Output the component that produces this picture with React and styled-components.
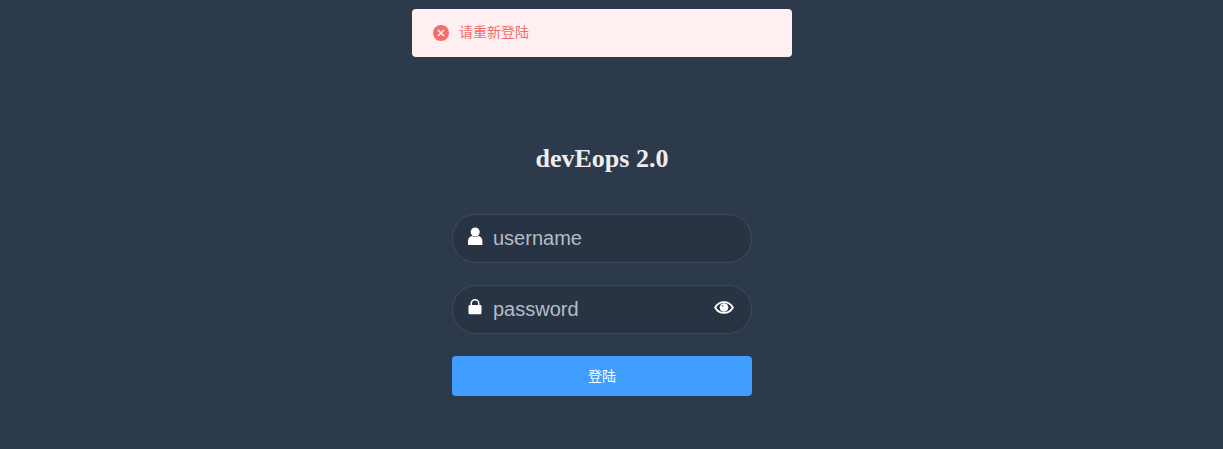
import React from 'react'
import styled, { createGlobalStyle } from 'styled-components'

const GlobalStyle = createGlobalStyle`
  html, body {
    margin: 0;
    height: 100%;
    background-color: #2d3a4b;
  }
  #root {
    height: 100%;
  }
`

const Page = styled.div`
  position: relative;
  box-sizing: border-box;
  width: 1204px;
  height: 449px;
  overflow: hidden;
  padding-top: 144px;
  font-family: "Liberation Sans", "Noto Sans CJK SC", sans-serif;
`

const Message = styled.div`
  position: absolute;
  top: 9px;
  left: 50%;
  transform: translateX(-50%);
  box-sizing: border-box;
  width: 380px;
  height: 48px;
  padding: 0 21px;
  display: flex;
  align-items: center;
  gap: 10px;
  background-color: #fef0f0;
  border-radius: 4px;
  color: #f56c6c;
  font-size: 14px;
`

const MessageIcon = styled.svg`
  width: 16px;
  height: 16px;
  flex: none;
`

const MessageText = styled.span`
  margin-bottom: 4px;
`

const Title = styled.h3`
  margin: 0 0 41px;
  height: 29px;
  line-height: 29px;
  text-align: center;
  color: #eee;
  font-family: "Liberation Serif", serif;
  font-size: 26px;
  font-weight: bold;
`

const Form = styled.form`
  width: 300px;
  margin: 0 auto;
  display: flex;
  flex-direction: column;
  gap: 22px;
`

const Field = styled.label`
  box-sizing: border-box;
  height: 49px;
  padding: 0 15px;
  display: flex;
  align-items: center;
  background-color: rgba(0, 0, 0, 0.1);
  border: 1px solid rgba(255, 255, 255, 0.1);
  border-radius: 24px;
`

const FieldIcon = styled.svg`
  width: 16px;
  height: 18px;
  flex: none;
  margin-top: -5px;
  fill: #fff;
`

const Input = styled.input`
  flex: 1;
  min-width: 0;
  margin-left: 9px;
  padding: 0;
  border: 0;
  outline: 0;
  background: transparent;
  color: #fff;
  font-family: inherit;
  font-size: 20px;
  &::placeholder {
    color: #b4bcc8;
    opacity: 1;
  }
`

const EyeIcon = styled.svg`
  width: 20px;
  height: 15px;
  flex: none;
  margin: -4px 2px 0 0;
`

const Submit = styled.button`
  height: 40px;
  padding: 0 0 3px;
  border: 0;
  border-radius: 4px;
  background-color: #409eff;
  color: #fff;
  font-family: inherit;
  font-size: 14px;
`

export default function App() {
  return (
    <Page>
      <GlobalStyle />
      <Message>
        <MessageIcon viewBox="0 0 16 16">
          <circle cx="8" cy="8" r="8" fill="#f56c6c" />
          <path d="M5 5l6 6M11 5l-6 6" stroke="#fef0f0" strokeWidth="1.700" />
        </MessageIcon>
        <MessageText>请重新登陆</MessageText>
      </Message>
      <Title>devEops 2.0</Title>
      <Form>
        <Field>
          <FieldIcon viewBox="0 0 16 18">
            <circle cx="7.200" cy="5" r="4.500" />
            <path d="M0 18v-4C0 11 2 9.400 4 9c1.900 1.200 4.500 1.200 6.400 0 2 .4 4 2 4 5v4z" />
          </FieldIcon>
          <Input placeholder="username" />
        </Field>
        <Field>
          <FieldIcon viewBox="0 0 16 18">
            <path d="M2.500 8V5.500a4.500 4.500 0 0 1 9 0V8H10V5.500a3 3 0 0 0-6 0V8z" />
            <rect x="0.500" y="7" width="13" height="9.300" rx="1.200" />
          </FieldIcon>
          <Input placeholder="password" />
          <EyeIcon viewBox="0 0 22 16">
            <path d="M1.200 8C3.500 4 7 2 11 2s7.500 2 9.800 6c-2.300 4-5.800 6-9.800 6S3.500 12 1.200 8z" fill="none" stroke="#fff" strokeWidth="2" />
            <circle cx="11" cy="8" r="4.800" fill="#fff" />
            <circle cx="9.400" cy="6" r="1.100" fill="#8a93a0" />
          </EyeIcon>
        </Field>
        <Submit type="button">登陆</Submit>
      </Form>
    </Page>
  )
}
